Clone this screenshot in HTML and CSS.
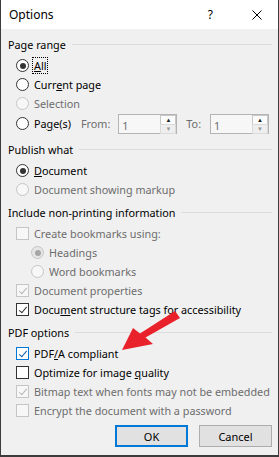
FILE: index.html
```html
<!DOCTYPE html>
<html>
    <head>
        <title>Options</title>
        <link rel="stylesheet" href="styles.css">
    </head>
    <body>
        <div class="dialog">
            <div class="title-bar">
                <span class="title">Options</span>
                <span class="help">?</span>
                <svg class="close" width="10" height="10" viewBox="0 0 10 10">
                    <path d="M0.5 0.5 L9.5 9.5 M9.5 0.5 L0.5 9.5" stroke="#000" stroke-width="1"/>
                </svg>
            </div>

            <div class="content">
                <div class="group">
                    <div class="group-head"><span>Page range</span><span class="rule"></span></div>
                    <div class="row"><span class="radio checked"></span><span class="label focus"><u>A</u>ll</span></div>
                    <div class="row"><span class="radio"></span><span class="label">Curr<u>e</u>nt page</span></div>
                    <div class="row disabled"><span class="radio"></span><span class="label">Selection</span></div>
                    <div class="row spin-row">
                        <span class="radio"></span><span class="label">Pa<u>g</u>e(s)</span>
                        <span class="spin-label from">From:</span>
                        <span class="spin"><span class="spin-value">1</span><span class="spin-btns"><span class="up">&#9650;</span><span class="down">&#9660;</span></span></span>
                        <span class="spin-label to">To:</span>
                        <span class="spin"><span class="spin-value">1</span><span class="spin-btns"><span class="up">&#9650;</span><span class="down">&#9660;</span></span></span>
                    </div>
                </div>

                <div class="group">
                    <div class="group-head"><span>Publish what</span><span class="rule"></span></div>
                    <div class="row"><span class="radio checked"></span><span class="label"><u>D</u>ocument</span></div>
                    <div class="row disabled"><span class="radio"></span><span class="label">Document showing markup</span></div>
                </div>

                <div class="group">
                    <div class="group-head"><span>Include non-printing information</span><span class="rule"></span></div>
                    <div class="row disabled"><span class="check"></span><span class="label">Create bookmarks using:</span></div>
                    <div class="row disabled indent"><span class="radio checked"></span><span class="label">Headings</span></div>
                    <div class="row disabled indent"><span class="radio"></span><span class="label">Word bookmarks</span></div>
                    <div class="row disabled"><span class="check checked"></span><span class="label">Document properties</span></div>
                    <div class="row"><span class="check checked"></span><span class="label">Docu<u>m</u>ent structure tags for accessibility</span></div>
                </div>

                <div class="group">
                    <div class="group-head"><span>PDF options</span><span class="rule"></span></div>
                    <div class="row"><span class="check checked hover"></span><span class="label">PDF<u>/</u>A compliant</span></div>
                    <div class="row"><span class="check"></span><span class="label">Optimize for image <u>q</u>uality</span></div>
                    <div class="row disabled"><span class="check checked"></span><span class="label">Bitmap text when fonts may not be embedded</span></div>
                    <div class="row disabled"><span class="check"></span><span class="label">Encrypt the document with a password</span></div>
                </div>

                <div class="buttons">
                    <button class="btn default">OK</button>
                    <button class="btn">Cancel</button>
                </div>
            </div>

            <svg class="arrow" width="279" height="457" viewBox="0 0 279 457">
                <polygon fill="#e8212b" points="122,350 133,328 140,333.5 175,311 180,318 145.5,337.5 153,344"/>
            </svg>
        </div>
    </body>
</html>
```

FILE: styles.css
```css
body{
    margin: 0;
    background-color: #f0f0f0;
    font-family: "Noto Sans", "Liberation Sans", sans-serif;
    font-size: 10.8px;
    color: #000;
}

.dialog{
    position: relative;
    width: 279px;
    height: 457px;
    box-sizing: border-box;
    border-left: 1px solid #3c3c3c;
    border-right: 1px solid #3c3c3c;
    border-bottom: 2px solid #3c3c3c;
    background-color: #f0f0f0;
    overflow: hidden;
}

.title-bar{
    height: 29px;
    background-color: #fff;
    display: flex;
    align-items: center;
}

.title{
    font-size: 12px;
    margin-left: 8px;
    flex: 1;
}

.help{
    font-size: 12px;
    margin-right: 39px;
}

.close{
    margin-right: 16px;
}

.content{
    padding: 6px 6px 0 7px;
}

.group{
    margin-bottom: 4px;
}

.group-head{
    height: 19px;
    display: flex;
    align-items: center;
    margin-bottom: 2px;
}

.rule{
    flex: 1;
    height: 1px;
    background-color: #dcdcdc;
    margin-left: 6px;
}

.row{
    height: 19px;
    display: flex;
    align-items: center;
    padding-left: 8px;
}

.indent{
    padding-left: 23px;
}

.label{
    margin-left: 5px;
    white-space: nowrap;
}

.focus{
    outline: 1px dotted #000;
    outline-offset: 0;
    padding: 0 1px;
    margin-left: 4px;
}

.disabled{
    color: #6d6d6d;
}

.radio{
    width: 11px;
    height: 11px;
    border: 1px solid #333;
    border-radius: 50%;
    background-color: #fff;
    position: relative;
    flex: none;
}

.radio.checked::after{
    content: "";
    position: absolute;
    left: 2.5px;
    top: 2.5px;
    width: 6px;
    height: 6px;
    border-radius: 50%;
    background-color: #333;
}

.disabled .radio{
    border-color: #c5c5c5;
    background-color: #f7f7f7;
}

.disabled .radio.checked{
    background-color: #e6e6e6;
}

.disabled .radio.checked::after{
    background-color: #a6a6a6;
}

.check{
    width: 11px;
    height: 11px;
    border: 1px solid #333;
    background-color: #fff;
    position: relative;
    flex: none;
}

.check.checked::after{
    content: "";
    position: absolute;
    left: 3.5px;
    top: 0.5px;
    width: 3px;
    height: 7px;
    border-right: 1.2px solid #333;
    border-bottom: 1.2px solid #333;
    transform: rotate(40deg);
}

.check.hover{
    border-color: #0078d7;
}

.check.hover::after{
    border-color: #0f5aa6;
}

.disabled .check{
    border-color: #c5c5c5;
    background-color: #f7f7f7;
}

.disabled .check.checked::after{
    border-color: #b5b5b5;
}

.spin-row{
    height: 21px;
    padding-bottom: 2px;
}

.spin-label{
    color: #6d6d6d;
    margin-left: 10px;
    margin-right: 8px;
}

.spin-label.to{
    margin-left: 9px;
    margin-right: 9px;
}

.spin{
    width: 57px;
    height: 18px;
    border: 1px solid #b4b4b4;
    background-color: #f7f7f7;
    display: flex;
    align-items: center;
    color: #6d6d6d;
}

.spin-value{
    flex: 1;
    padding-left: 3px;
    padding-top: 3px;
}

.spin-btns{
    width: 16px;
    height: 18px;
    display: flex;
    flex-direction: column;
    font-size: 6px;
    line-height: 8px;
    text-align: center;
}

.spin-btns .up{
    height: 8px;
    border: 1px solid #c8c8c8;
    border-bottom: none;
    background-color: #fbfbfb;
    color: #222;
}

.spin-btns .down{
    height: 8px;
    border: 1px solid #dadada;
    background-color: #eeeeee;
    color: #9a9a9a;
}

.buttons{
    display: flex;
    justify-content: flex-end;
    gap: 11px;
    margin-top: 5px;
    padding-right: 0;
}

.btn{
    width: 73px;
    height: 22px;
    box-sizing: border-box;
    font-family: "Noto Sans", "Liberation Sans", sans-serif;
    font-size: 11px;
    background-color: #e1e1e1;
    border: 1px solid #adadad;
    padding: 0;
    color: #000;
}

.btn.default{
    border: 2px solid #0078d7;
}

.arrow{
    position: absolute;
    left: -1px;
    top: 0;
    pointer-events: none;
}
```
